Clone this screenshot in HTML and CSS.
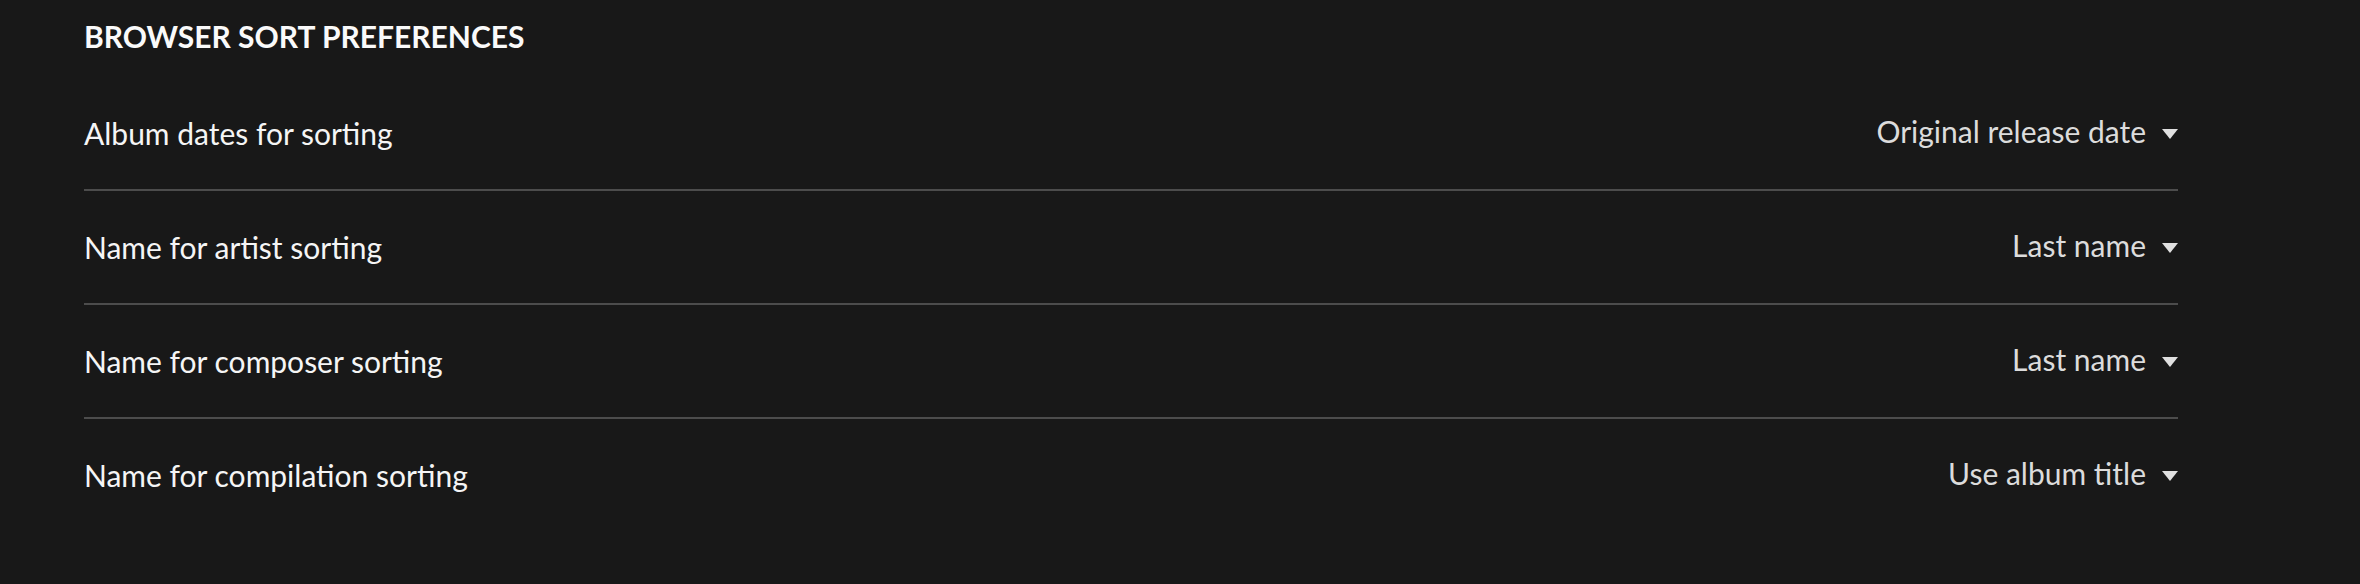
FILE: index.html
```html
<!DOCTYPE html>
<html lang="en">
<head>
  <meta charset="UTF-8">
  <meta name="viewport" content="width=device-width, initial-scale=1.0">
  <title>Browser Sort Preferences</title>
  <link rel="stylesheet" href="styles.css">
</head>
<body>
  <div class="content">
    <h2 class="section-title">BROWSER SORT PREFERENCES</h2>

    <!-- Preference rows -->
    <div class="pref-list">
      <div class="pref-row">
        <span class="pref-label">Album dates for sorting</span>
        <span class="pref-value">Original release date <span class="caret"></span></span>
      </div>
      <div class="pref-row">
        <span class="pref-label">Name for artist sorting</span>
        <span class="pref-value">Last name <span class="caret"></span></span>
      </div>
      <div class="pref-row">
        <span class="pref-label">Name for composer sorting</span>
        <span class="pref-value">Last name <span class="caret"></span></span>
      </div>
      <div class="pref-row">
        <span class="pref-label">Name for compilation sorting</span>
        <span class="pref-value">Use album title <span class="caret"></span></span>
      </div>
    </div>
  </div>
</body>
</html>
```

FILE: styles.css
```css
body {
  margin: 0;
  padding: 0;
  font-family: 'Lato', 'Liberation Sans', sans-serif;
  background-color: #181818;
  color: #f5f5f5;
}

.content {
  padding: 18px 182px 0 84px;
}

.section-title {
  margin: 0 0 23px 0;
  font-size: 30px;
  line-height: 36px;
  font-weight: bold;
  color: #fafafa;
}

.pref-row {
  display: flex;
  align-items: center;
  justify-content: space-between;
  height: 112px;
  font-size: 30px;
  border-bottom: 2px solid #4c4c4c;
}

.pref-row:last-child {
  border-bottom: none;
}

.pref-label {
  line-height: 36px;
}

.pref-value {
  display: flex;
  align-items: center;
  line-height: 36px;
  padding-bottom: 4px;
  color: #dcdcdc;
}

/* little dropdown triangle */
.caret {
  width: 0;
  height: 0;
  margin-left: 16px;
  margin-top: 6px;
  border-left: 8px solid transparent;
  border-right: 8px solid transparent;
  border-top: 10px solid #e0e0e0;
}
```
